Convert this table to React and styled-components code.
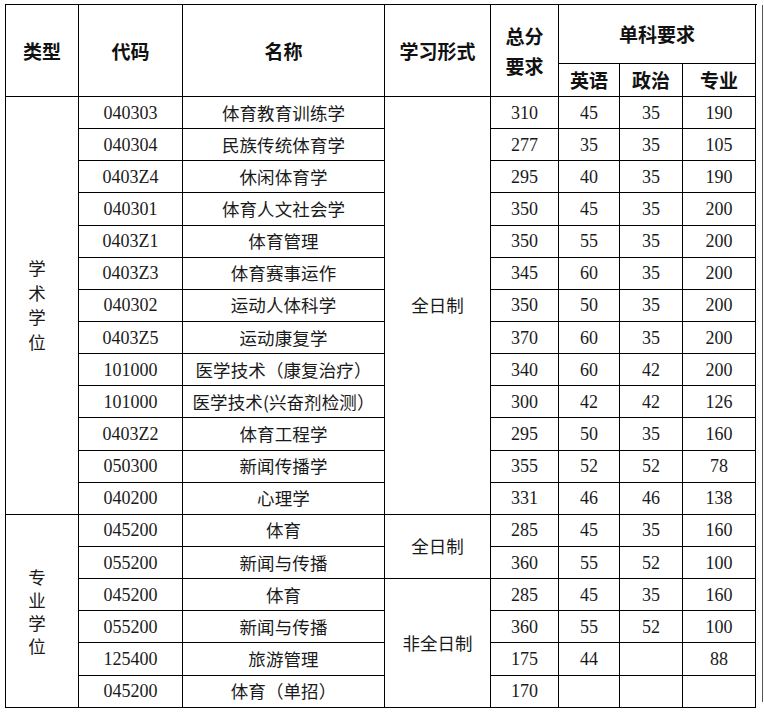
import React from 'react'
import styled, { createGlobalStyle } from 'styled-components'

const GlobalStyle = createGlobalStyle`
  html, body {
    margin: 0;
    padding: 0;
    background: #fff;
  }
  body {
    font-family: "Liberation Serif", "Noto Sans CJK SC", serif;
    color: #111;
  }
`

const Page = styled.div`
  display: flex;
  align-items: stretch;
  padding: 4px 0 0 5px;
  width: 764px;
  box-sizing: border-box;
`

const Sheet = styled.table`
  border-collapse: collapse;
  table-layout: fixed;
  width: 750px;
  border: 1.5px solid #000;
`

const EdgeLine = styled.div`
  width: 1px;
  margin: 1px 0 6px 6px;
  background: #555;
`

const HeadCell = styled.th`
  border: 1px solid #000;
  padding: 0;
  height: ${(p) => p.h || 32}px;
  font-family: "Noto Sans CJK SC", sans-serif;
  font-weight: 600;
  font-size: 19px;
  line-height: ${(p) => (p.stack ? '30px' : '24px')};
  text-align: center;
  vertical-align: middle;
  color: #111;
`

const Cell = styled.td`
  border: 1px solid #000;
  padding: 0;
  height: 31.15px;
  font-size: ${(p) => (p.han ? '17.5px' : '18px')};
  font-family: ${(p) =>
    p.han ? '"Noto Sans CJK SC", sans-serif' : '"Liberation Serif", "Noto Sans CJK SC", serif'};
  text-align: center;
  vertical-align: middle;
  line-height: 20px;
  white-space: nowrap;
  color: #1a1a1a;
`

const GroupCell = styled.td`
  border: 1px solid #000;
  padding: 0 10px 0 0;
  vertical-align: middle;
  text-align: center;
`

const VerticalLabel = styled.div`
  width: 18px;
  margin: 0 auto;
  font-family: "Noto Sans CJK SC", sans-serif;
  font-size: 17.5px;
  line-height: ${(p) => p.gap}px;
  word-break: break-all;
  color: #1a1a1a;
`

const NameCell = styled(Cell)`
  letter-spacing: 0.1px;
`

const academic = [
  ['040303', '体育教育训练学', '310', '45', '35', '190'],
  ['040304', '民族传统体育学', '277', '35', '35', '105'],
  ['0403Z4', '休闲体育学', '295', '40', '35', '190'],
  ['040301', '体育人文社会学', '350', '45', '35', '200'],
  ['0403Z1', '体育管理', '350', '55', '35', '200'],
  ['0403Z3', '体育赛事运作', '345', '60', '35', '200'],
  ['040302', '运动人体科学', '350', '50', '35', '200'],
  ['0403Z5', '运动康复学', '370', '60', '35', '200'],
  ['101000', '医学技术（康复治疗）', '340', '60', '42', '200'],
  ['101000', '医学技术(兴奋剂检测）', '300', '42', '42', '126'],
  ['0403Z2', '体育工程学', '295', '50', '35', '160'],
  ['050300', '新闻传播学', '355', '52', '52', '78'],
  ['040200', '心理学', '331', '46', '46', '138'],
]

const professional = [
  ['045200', '体育', '285', '45', '35', '160'],
  ['055200', '新闻与传播', '360', '55', '52', '100'],
  ['045200', '体育', '285', '45', '35', '160'],
  ['055200', '新闻与传播', '360', '55', '52', '100'],
  ['125400', '旅游管理', '175', '44', '', '88'],
  ['045200', '体育（单招）', '170', '', '', ''],
]

const widths = [73, 104, 202, 106, 68, 61, 63, 73]

const Row = ({ row, lead, mode }) => (
  <tr>
    {lead}
    <Cell>{row[0]}</Cell>
    <NameCell han>{row[1]}</NameCell>
    {mode}
    <Cell>{row[2]}</Cell>
    <Cell>{row[3]}</Cell>
    <Cell>{row[4]}</Cell>
    <Cell>{row[5]}</Cell>
  </tr>
)

const ModeCell = ({ span, children }) => (
  <Cell han rowSpan={span}>
    {children}
  </Cell>
)

export default function App() {
  return (
    <>
      <GlobalStyle />
      <Page>
        <Sheet>
          <colgroup>
            {widths.map((w, i) => (
              <col key={i} style={{ width: w }} />
            ))}
          </colgroup>
          <thead>
            <tr>
              <HeadCell rowSpan={2} h={58}>类型</HeadCell>
              <HeadCell rowSpan={2} h={58}>代码</HeadCell>
              <HeadCell rowSpan={2} h={58}>名称</HeadCell>
              <HeadCell rowSpan={2} h={58}>学习形式</HeadCell>
              <HeadCell rowSpan={2} h={58} stack>
                总分
                <br />
                要求
              </HeadCell>
              <HeadCell colSpan={4} h={58}>单科要求</HeadCell>
            </tr>
            <tr>
              <HeadCell h={32}>英语</HeadCell>
              <HeadCell h={32}>政治</HeadCell>
              <HeadCell h={32}>专业</HeadCell>
            </tr>
          </thead>
          <tbody>
            {academic.map((row, i) => (
              <Row
                key={'a' + i}
                row={row}
                lead={
                  i === 0 ? (
                    <GroupCell rowSpan={academic.length}>
                      <VerticalLabel gap={24.5}>学术学位</VerticalLabel>
                    </GroupCell>
                  ) : null
                }
                mode={i === 0 ? <ModeCell span={academic.length}>全日制</ModeCell> : null}
              />
            ))}
            {professional.map((row, i) => (
              <Row
                key={'p' + i}
                row={row}
                lead={
                  i === 0 ? (
                    <GroupCell rowSpan={professional.length}>
                      <VerticalLabel gap={23}>专业学位</VerticalLabel>
                    </GroupCell>
                  ) : null
                }
                mode={
                  i === 0 ? (
                    <ModeCell span={2}>全日制</ModeCell>
                  ) : i === 2 ? (
                    <ModeCell span={4}>非全日制</ModeCell>
                  ) : null
                }
              />
            ))}
          </tbody>
        </Sheet>
        <EdgeLine />
      </Page>
    </>
  )
}
